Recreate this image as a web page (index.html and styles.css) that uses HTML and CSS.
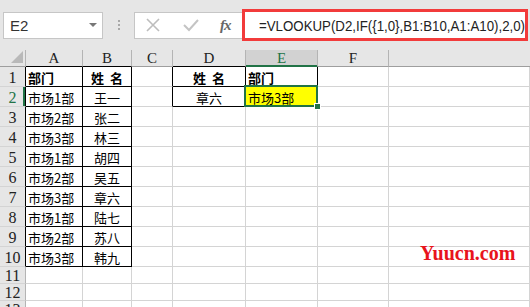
FILE: index.html
```html
<!DOCTYPE html>
<html lang="zh-CN">
<head>
  <meta charset="UTF-8" />
  <title>VLOOKUP</title>
  <link rel="stylesheet" href="styles.css">
</head>
<body>

  <!-- formula bar -->
  <div class="toolbar">
    <div class="namebox">
      <span>E2</span>
      <span class="caret"></span>
    </div>
    <div class="grip"><i></i><i></i><i></i></div>
    <div class="fxbar">
      <svg class="ico-x" width="14" height="14" viewBox="0 0 14 14">
        <path d="M1 1 L13 13 M13 1 L1 13" stroke="#bdbdbd" stroke-width="1.6" fill="none"/>
      </svg>
      <svg class="ico-ok" width="16" height="14" viewBox="0 0 16 14">
        <path d="M1 7 L6 12 L15 2" stroke="#c4c4c4" stroke-width="2" fill="none"/>
      </svg>
      <span class="fx">fx</span>
    </div>
    <div class="formula"><span>=VLOOKUP(D2,IF({1,0},B1:B10,A1:A10),2,0)</span></div>
  </div>

  <!-- sheet -->
  <div class="sheet">
    <div class="corner"></div>
    <div class="h bk-b">A</div>
    <div class="h bk-b">B</div>
    <div class="h">C</div>
    <div class="h bk-b">D</div>
    <div class="h sel">E</div>
    <div class="h">F</div>
    <div class="h last"></div>

    <div class="r bk-r">1</div>
    <div class="c bk-r bk-b b">部门</div>
    <div class="c bk-r bk-b b mid">姓&nbsp;&nbsp;名</div>
    <div class="c bk-r"></div>
    <div class="c bk-r bk-b b mid">姓&nbsp;&nbsp;名</div>
    <div class="c bk-r bk-b b">部门</div>
    <div class="c"></div>
    <div class="c"></div>

    <div class="r bk-r rsel">2</div>
    <div class="c bk-r bk-b">市场1部</div>
    <div class="c bk-r bk-b mid">王一</div>
    <div class="c bk-r"></div>
    <div class="c bk-r bk-b mid">章六</div>
    <div class="c bk-r bk-b active">市场3部<span class="handle"></span></div>
    <div class="c"></div>
    <div class="c"></div>

    <div class="r bk-r">3</div>
    <div class="c bk-r bk-b">市场2部</div>
    <div class="c bk-r bk-b mid">张二</div>
    <div class="c"></div><div class="c"></div><div class="c"></div><div class="c"></div><div class="c"></div>

    <div class="r bk-r">4</div>
    <div class="c bk-r bk-b">市场3部</div>
    <div class="c bk-r bk-b mid">林三</div>
    <div class="c"></div><div class="c"></div><div class="c"></div><div class="c"></div><div class="c"></div>

    <div class="r bk-r">5</div>
    <div class="c bk-r bk-b">市场1部</div>
    <div class="c bk-r bk-b mid">胡四</div>
    <div class="c"></div><div class="c"></div><div class="c"></div><div class="c"></div><div class="c"></div>

    <div class="r bk-r">6</div>
    <div class="c bk-r bk-b">市场2部</div>
    <div class="c bk-r bk-b mid">吴五</div>
    <div class="c"></div><div class="c"></div><div class="c"></div><div class="c"></div><div class="c"></div>

    <div class="r bk-r">7</div>
    <div class="c bk-r bk-b">市场3部</div>
    <div class="c bk-r bk-b mid">章六</div>
    <div class="c"></div><div class="c"></div><div class="c"></div><div class="c"></div><div class="c"></div>

    <div class="r bk-r">8</div>
    <div class="c bk-r bk-b">市场1部</div>
    <div class="c bk-r bk-b mid">陆七</div>
    <div class="c"></div><div class="c"></div><div class="c"></div><div class="c"></div><div class="c"></div>

    <div class="r bk-r">9</div>
    <div class="c bk-r bk-b">市场2部</div>
    <div class="c bk-r bk-b mid">苏八</div>
    <div class="c"></div><div class="c"></div><div class="c"></div><div class="c"></div><div class="c"></div>

    <div class="r bk-r">10</div>
    <div class="c bk-r bk-b">市场3部</div>
    <div class="c bk-r bk-b mid">韩九</div>
    <div class="c"></div><div class="c"></div><div class="c"></div><div class="c"></div><div class="c"></div>

    <div class="r">11</div>
    <div class="c"></div><div class="c"></div><div class="c"></div><div class="c"></div><div class="c"></div><div class="c"></div><div class="c"></div>

    <div class="r">12</div>
    <div class="c"></div><div class="c"></div><div class="c"></div><div class="c"></div><div class="c"></div><div class="c"></div><div class="c"></div>

    <div class="r">13</div>
    <div class="c"></div><div class="c"></div><div class="c"></div><div class="c"></div><div class="c"></div><div class="c"></div><div class="c"></div>

    <div class="watermark">Yuucn.com</div>
  </div>

</body>
</html>
```

FILE: styles.css
```css
* { box-sizing: border-box; }

html, body {
  margin: 0;
  padding: 0;
  width: 530px;
  height: 307px;
  overflow: hidden;
  background: #fff;
}

/* ---- formula bar ---- */
.toolbar {
  height: 50px;
  background: #e6e6e6;
  display: flex;
  align-items: center;
  padding-left: 3px;
}

.namebox {
  width: 100px;
  height: 27px;
  background: #fff;
  border: 1px solid #c6c6c6;
  display: flex;
  align-items: center;
  justify-content: space-between;
  padding: 0 5px 0 6px;
  font-family: "Liberation Sans", sans-serif;
  font-size: 15px;
  color: #333;
}

.caret {
  width: 0;
  height: 0;
  border-left: 4px solid transparent;
  border-right: 4px solid transparent;
  border-top: 4px solid #777;
}

.grip {
  width: 31px;
  display: flex;
  flex-direction: column;
  align-items: center;
  gap: 2px;
}

.grip i {
  width: 2px;
  height: 2px;
  background: #a8a8a8;
}

.fxbar {
  width: 108px;
  height: 27px;
  background: #fff;
  border: 1px solid #c6c6c6;
  border-right: none;
  display: flex;
  align-items: center;
  padding-left: 11px;
}

.ico-x { margin-right: 23px; }
.ico-ok { margin-right: 21px; }

.fx {
  font-family: "Liberation Serif", serif;
  font-style: italic;
  font-weight: bold;
  font-size: 15px;
  color: #666;
  letter-spacing: -1px;
}

.formula {
  width: 286px;
  height: 32px;
  background: #fff;
  border: 3px solid #f23b3b;
  display: flex;
  align-items: center;
  padding-left: 14px;
  font-family: "Liberation Sans", sans-serif;
  font-size: 15px;
  color: #222;
  white-space: nowrap;
}

.formula span {
  display: inline-block;
  transform: scaleX(0.885);
  transform-origin: left center;
}

/* ---- sheet ---- */
.sheet {
  position: relative;
  display: grid;
  grid-template-columns: 26px 57px 49px 41px 73px 72px 71px 1fr;
  grid-template-rows: 17px repeat(10, 20px) repeat(3, 17px);
}

.corner,
.h,
.r {
  background: #e6e6e6;
  border-right: 1px solid #b4b4b4;
  border-bottom: 1px solid #9e9e9e;
  font-family: "Liberation Serif", serif;
  color: #222;
}

.corner {
  position: relative;
}

.corner::after {
  content: "";
  position: absolute;
  right: 2px;
  bottom: 3px;
  width: 0;
  height: 0;
  border-left: 12px solid transparent;
  border-bottom: 12px solid #b9b9b9;
}

.h {
  display: flex;
  align-items: center;
  justify-content: center;
  font-size: 15px;
  padding-top: 1px;
}

.h.last { border-right: none; }

.h.sel {
  background: #d2d2d2;
  color: #217346;
  border-bottom-color: #217346;
  box-shadow: inset 0 -1px #217346;
}

.r {
  border-bottom-color: #d4d4d4;
  display: flex;
  align-items: center;
  justify-content: center;
  font-size: 16px;
  padding-top: 2px;
}

.r.rsel {
  color: #217346;
  box-shadow: inset -2px 0 #217346;
}

.c {
  border-right: 1px solid #d4d4d4;
  border-bottom: 1px solid #d4d4d4;
  display: flex;
  align-items: center;
  padding: 1px 0 0 2px;
  font-family: "Noto Sans CJK SC", sans-serif;
  font-size: 13px;
  color: #000;
  white-space: nowrap;
}

.c.mid { justify-content: center; padding-left: 0; }
.c.b { font-weight: bold; }

.bk-r { border-right-color: #000; }
.bk-b { border-bottom-color: #000; }

.c.active {
  position: relative;
  background: #ffff00;
}

.c.active::before {
  content: "";
  position: absolute;
  left: -2px;
  top: -2px;
  right: -1px;
  bottom: -1px;
  border: 2px solid #217346;
}

.handle {
  position: absolute;
  right: -4px;
  bottom: -4px;
  width: 7px;
  height: 7px;
  background: #217346;
  border: 1px solid #fff;
  z-index: 1;
}

.watermark {
  position: absolute;
  left: 420px;
  top: 192px;
  font-family: "Liberation Serif", serif;
  font-weight: bold;
  font-size: 20px;
  color: #e8141c;
}
```
